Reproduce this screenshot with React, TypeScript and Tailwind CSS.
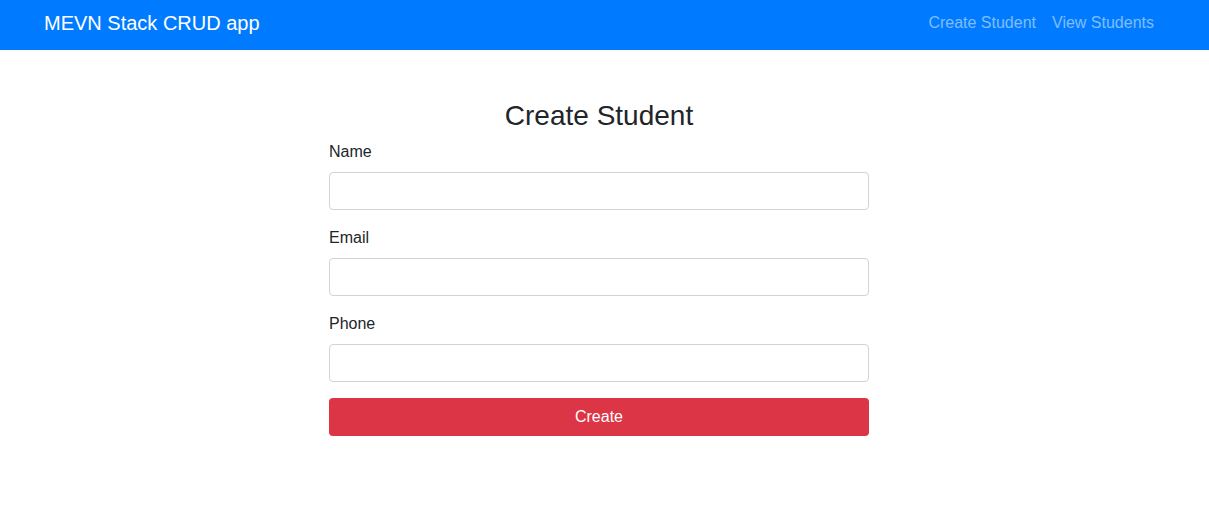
export default function App() {
  return (
    <div className="min-h-screen bg-white text-[#212529] font-['Liberation_Sans',Arial,sans-serif] text-base leading-6">
      {/* Navbar */}
      <nav className="h-[50px] bg-[#007bff] flex items-center justify-between pb-[5px] pl-[44px] pr-[47px]">
        <a href="#" className="text-white text-[20px] leading-[30px]">
          MEVN Stack CRUD app
        </a>
        <div className="flex">
          <a href="#" className="px-2 text-[rgba(255,255,255,0.5)]">Create Student</a>
          <a href="#" className="px-2 text-[rgba(255,255,255,0.5)]">View Students</a>
        </div>
      </nav>

      {/* Form */}
      <div className="flex justify-center pr-[11px] pt-[49px]">
        <div className="w-[540px]">
          <h3 className="text-center text-[28px] leading-[33.6px] mb-[7px]">Create Student</h3>
          <form onSubmit={(e) => e.preventDefault()}>
            <div className="mb-4">
              <label className="block mb-2">Name</label>
              <input type="text" className="block w-full h-[38px] px-3 border border-[#ced4da] rounded-[4px] outline-none" />
            </div>
            <div className="mb-4">
              <label className="block mb-2">Email</label>
              <input type="email" className="block w-full h-[38px] px-3 border border-[#ced4da] rounded-[4px] outline-none" />
            </div>
            <div className="mb-4">
              <label className="block mb-2">Phone</label>
              <input type="text" className="block w-full h-[38px] px-3 border border-[#ced4da] rounded-[4px] outline-none" />
            </div>
            <button className="block w-full h-[38px] bg-[#dc3545] text-white rounded-[4px]">Create</button>
          </form>
        </div>
      </div>
    </div>
  );
}
